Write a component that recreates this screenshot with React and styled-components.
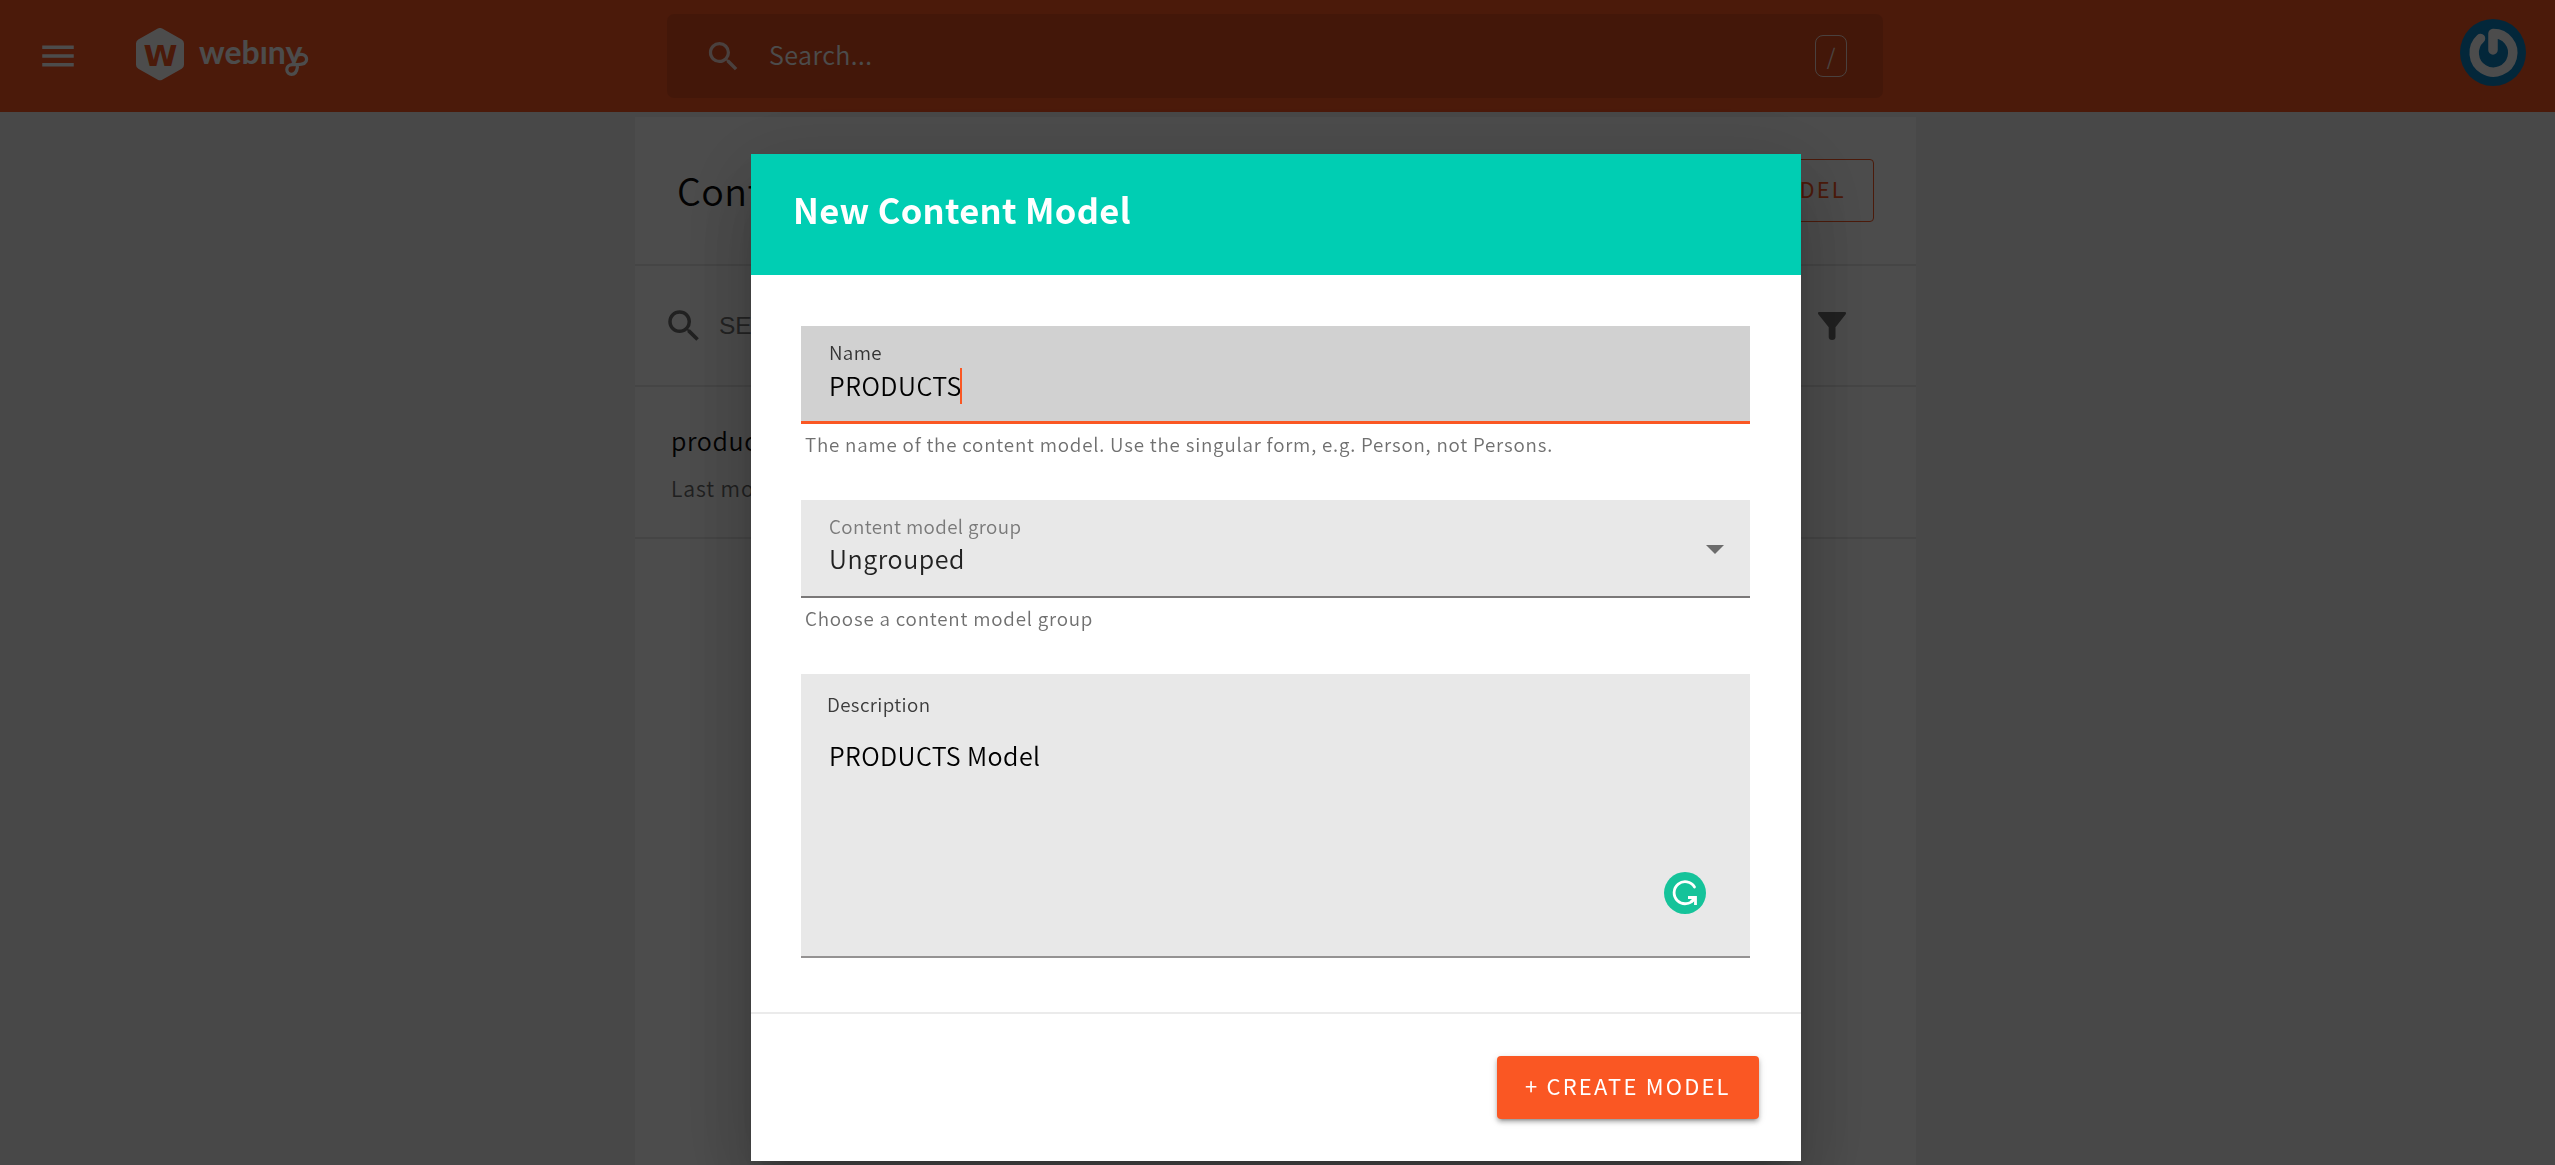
import React from "react";
import styled, { createGlobalStyle } from "styled-components";

const sans = `"Noto Sans CJK JP", "Noto Sans", sans-serif`;
const orange = "#fa5723";

const GlobalStyle = createGlobalStyle`
  *, *::before, *::after { box-sizing: border-box; }
  body {
    margin: 0;
    overflow: hidden;
    background: #f2f2f2;
    font-family: ${sans};
    font-weight: 350;
  }
`;

const Page = styled.div`
  height: 1165px;
  overflow: hidden;
  background: #f2f2f2;
`;

/* ---------- top bar ---------- */
const TopBar = styled.header`
  display: grid;
  grid-template-columns: 667px 1216px 1fr;
  align-items: center;
  height: 112px;
  background: ${orange};
`;
const Brand = styled.div`
  display: flex;
  align-items: center;
  padding-left: 37px;
  gap: 57px;
`;
const SearchBox = styled.div`
  display: flex;
  align-items: center;
  height: 84px;
  padding: 0 36px 0 37px;
  border-radius: 7px;
  background: rgba(0, 0, 0, 0.1);
  color: #fff;
`;
const SearchLabel = styled.span`
  flex: 1;
  padding: 0 0 4px 26px;
  font-size: 25.07px;
  line-height: 36px;
  letter-spacing: 0.45px;
`;
const KeyHint = styled.span`
  display: flex;
  align-items: center;
  justify-content: center;
  width: 32px;
  height: 42px;
  padding-bottom: 3px;
  border: 1px solid rgba(255, 255, 255, 0.8);
  border-radius: 8px;
  font-size: 22px;
  line-height: 30px;
  color: rgba(255, 255, 255, 0.85);
`;
const AvatarSlot = styled.div`
  display: flex;
  justify-content: flex-end;
  padding: 0 29px 7px 0;
`;

/* ---------- list behind the dialog ---------- */
const Panel = styled.main`
  width: 1281px;
  height: 1048px;
  margin: 5px 0 0 635px;
  background: #fff;
`;
const PanelRow = styled.div`
  display: flex;
  align-items: center;
  justify-content: space-between;
  height: ${(p) => p.$height}px;
  padding: ${(p) => p.$padding};
  border-bottom: 2px solid #e6e6e6;
`;
const PanelTitle = styled.h1`
  margin: 0;
  padding-bottom: 2px;
  font-size: 37.6px;
  font-weight: 350;
  line-height: 54px;
  letter-spacing: 0.4px;
  color: #0a0a0a;
`;
const OutlineButton = styled.button`
  height: 63px;
  padding: 0 27px 3px;
  border: 1px solid ${orange};
  border-radius: 4px;
  background: transparent;
  color: ${orange};
  font: 400 21.9px/32px ${sans};
  letter-spacing: 2.25px;
`;
const FilterSearch = styled.div`
  display: flex;
  align-items: center;
  gap: 14px;
`;
const Placeholder = styled.span`
  font: 24.5px/30px "Liberation Sans", Arial, sans-serif;
  color: #757575;
`;
const ListItem = styled.div`
  height: 152px;
  padding: 35px 0 0 36px;
  border-bottom: 2px solid #e6e6e6;
`;
const ItemName = styled.div`
  font-size: 25.07px;
  line-height: 36px;
  letter-spacing: 0.6px;
  color: #0a0a0a;
`;
const ItemMeta = styled.div`
  margin-top: 15px;
  font-size: 21.2px;
  line-height: 30px;
  letter-spacing: 0.9px;
  color: #6b6b6b;
`;

/* ---------- dialog ---------- */
const Scrim = styled.div`
  position: fixed;
  inset: 0;
  display: flex;
  align-items: flex-start;
  justify-content: center;
  padding: 154px 3px 0 0;
  background: rgba(0, 0, 0, 0.7);
`;
const Dialog = styled.section`
  display: flex;
  flex-direction: column;
  width: 1050px;
  height: 1007px;
  background: #fff;
  box-shadow: 0 19px 26px -12px rgba(0, 0, 0, 0.2),
    0 42px 66px 5px rgba(0, 0, 0, 0.14), 0 16px 80px 14px rgba(0, 0, 0, 0.12);
`;
const DialogTitle = styled.h2`
  height: 121px;
  margin: 0;
  padding: 30px 41px 0 42px;
  background: #00ceb3;
  color: #fff;
  font-size: 34.5px;
  font-weight: 700;
  line-height: 50px;
  letter-spacing: 0.33px;
`;
const DialogBody = styled.div`
  display: flex;
  flex-direction: column;
  gap: 44px;
  height: 737px;
  padding: 51px 51px 0 50px;
`;
const Field = styled.div`
  display: flex;
  flex-direction: column;
`;
const FieldBox = styled.div`
  display: flex;
  align-items: center;
  justify-content: space-between;
  height: 98px;
  padding: 0 26px 0 28px;
  background: ${(p) => (p.$focused ? "#d1d1d1" : "#e8e8e8")};
  border-bottom: ${(p) => (p.$focused ? `3px solid ${orange}` : "2px solid #7a7878")};
`;
const FieldText = styled.div`
  align-self: flex-start;
  padding-top: 14px;
`;
const Label = styled.div`
  font-size: 18.8px;
  line-height: 24px;
  letter-spacing: 0.36px;
  color: ${(p) => p.$color};
`;
const Value = styled.div`
  display: flex;
  margin-top: ${(p) => p.$gap}px;
  font-size: 25.07px;
  line-height: 36px;
  letter-spacing: ${(p) => p.$spacing}px;
  color: ${(p) => p.$color || "#000"};
`;
const Caret = styled.i`
  width: 2px;
  height: 36px;
  margin: 1px 0 -1px -2px;
  background: ${orange};
`;
const Helper = styled.div`
  margin-top: 8px;
  padding-left: 4px;
  font-size: 18.8px;
  line-height: 24px;
  letter-spacing: 0.78px;
  color: #707070;
`;
const TextArea = styled.div`
  display: flex;
  justify-content: space-between;
  height: 284px;
  padding: 18px 44px 0 26px;
  background: #e8e8e8;
  border-bottom: 2px solid #949292;
`;
const AreaText = styled.div`
  ${Value} { padding-left: 2px; }
`;
const AssistantBadge = styled.div`
  align-self: flex-end;
  height: 84px;
`;
const DialogFooter = styled.footer`
  display: flex;
  justify-content: flex-end;
  align-items: flex-start;
  flex: 1;
  padding: 42px 42px 0;
  border-top: 2px solid #ebebeb;
`;
const PrimaryButton = styled.button`
  width: 262px;
  height: 63px;
  padding: 0 0 4px 28px;
  border: 0;
  border-radius: 4px;
  background: ${orange};
  color: #fff;
  text-align: left;
  font: 400 21.9px/32px ${sans};
  letter-spacing: 2.22px;
  box-shadow: 0 5px 2px -4px rgba(0, 0, 0, 0.2), 0 3px 4px 0 rgba(0, 0, 0, 0.24),
    0 2px 9px 0 rgba(0, 0, 0, 0.12);
`;
const Svg = styled.svg`
  display: block;
  flex: none;
`;
const ArrowSvg = styled(Svg)`
  margin-top: 3px;
`;

/* ---------- drawings ---------- */
const MenuIcon = () => (
  <Svg width="42" height="42" viewBox="0 0 24 24" fill="#fff">
    <path d="M3 18h18v-2H3v2zm0-5h18v-2H3v2zm0-7v2h18V6H3z" />
  </Svg>
);
const SearchIcon = ({ size, color }) => (
  <Svg width={size} height={size} viewBox="0 0 24 24" fill={color}>
    <path d="M15.5 14h-.79l-.28-.27A6.47 6.47 0 0 0 16 9.5 6.5 6.5 0 1 0 9.5 16c1.61 0 3.09-.59 4.23-1.57l.27.28v.79l5 4.99L20.49 19l-4.99-5zm-6 0C7.01 14 5 11.99 5 9.5S7.01 5 9.5 5 14 7.01 14 9.5 11.99 14 9.5 14z" />
  </Svg>
);
const FilterIcon = () => (
  <Svg width="28" height="28" viewBox="0 0 28 28" fill="#6e6e6e">
    <path d="M1.2 0h25.6c1.1 0 1.6 1.3.9 2.2L17.5 15.2V25a3.4 3 0 0 1-6.8 0V15.2L.3 2.2C-.4 1.3.1 0 1.2 0z" />
  </Svg>
);
const Logo = () => (
  <Svg width="180" height="56" viewBox="0 0 180 56">
    <defs>
      <clipPath id="aboveBaseline">
        <rect x="0" y="0" width="180" height="36.5" />
      </clipPath>
    </defs>
    <path
      d="M24 4.5 43.5 15.500V36.800L24 47.700 4.500 36.800V15.500Z"
      fill="#fff"
      stroke="#fff"
      strokeWidth="9"
      strokeLinejoin="round"
    />
    <text
      transform="translate(7.400 38) scale(1.080 1)"
      fontFamily="DejaVu Sans"
      fontWeight="700"
      fontSize="28.5"
      fill={orange}
    >
      W
    </text>
    <text x="63" y="36" fontFamily="Lato" fontWeight="700" fontSize="32" fill="#fff" clipPath="url(#aboveBaseline)">
      webıny
    </text>
    <path
      d="M161.500 27C166 25.200 170.600 27 170.600 31.200C170.600 35.200 166.500 36.600 161 36.600H156.500C152.500 36.600 150.800 39 150.800 41.600C150.800 44.600 153 46.300 155.500 46.300C159.500 46.300 161 43 161.500 38.500"
      fill="none"
      stroke="#fff"
      strokeWidth="3.2"
      strokeLinecap="round"
    />
  </Svg>
);
const Avatar = () => (
  <Svg width="66" height="67" viewBox="0 0 66 67">
    <ellipse cx="33" cy="33.5" rx="33" ry="33.5" fill="#0c82c4" />
    <path
      d="M33 31V14.500A19.300 19.300 0 1 1 20.500 19.500"
      fill="none"
      stroke="#fff"
      strokeWidth="9.5"
      strokeLinecap="round"
      strokeLinejoin="round"
    />
  </Svg>
);
const DropArrow = () => (
  <ArrowSvg width="18" height="9" viewBox="0 0 18 9">
    <path d="M0 0h18L9 9z" fill="#6c6c6c" />
  </ArrowSvg>
);
const AssistantIcon = () => (
  <Svg width="42" height="42" viewBox="0 0 42 42" fill="none" stroke="#fff">
    <circle cx="21" cy="21" r="21" fill="#15c39a" stroke="none" />
    <path d="M30.500 15A11 11 0 1 0 30 27.200" strokeWidth="2.8" strokeLinecap="round" />
    <path d="M24 25.500H31.500V33" strokeWidth="2.8" />
    <path d="M31 26 27 30" strokeWidth="2.8" />
  </Svg>
);

export default function App() {
  return (
    <Page>
      <GlobalStyle />
      <TopBar>
        <Brand>
          <MenuIcon />
          <Logo />
        </Brand>
        <SearchBox>
          <SearchIcon size={39} color="rgba(255,255,255,.8)" />
          <SearchLabel>Search...</SearchLabel>
          <KeyHint>/</KeyHint>
        </SearchBox>
        <AvatarSlot>
          <Avatar />
        </AvatarSlot>
      </TopBar>
      <Panel>
        <PanelRow $height={149} $padding="0 42px 0 42px">
          <PanelTitle>Content Models</PanelTitle>
          <OutlineButton>+ NEW MODEL</OutlineButton>
        </PanelRow>
        <PanelRow $height={121} $padding="0 70px 0 28px">
          <FilterSearch>
            <SearchIcon size={42} color="#6e6e6e" />
            <Placeholder>SEARCH CONTENT MODEL</Placeholder>
          </FilterSearch>
          <FilterIcon />
        </PanelRow>
        <ListItem>
          <ItemName>products</ItemName>
          <ItemMeta>Last modified: 1 minute ago.</ItemMeta>
        </ListItem>
      </Panel>
      <Scrim>
        <Dialog>
          <DialogTitle>New Content Model</DialogTitle>
          <DialogBody>
            <Field>
              <FieldBox $focused>
                <FieldText>
                  <Label $color="#333">Name</Label>
                  <Value $gap={3} $spacing={0.5}>
                    PRODUCTS
                    <Caret />
                  </Value>
                </FieldText>
              </FieldBox>
              <Helper>The name of the content model. Use the singular form, e.g. Person, not Persons.</Helper>
            </Field>
            <Field>
              <FieldBox>
                <FieldText>
                  <Label $color="#7a7a7a">Content model group</Label>
                  <Value $gap={2} $spacing={0.55} $color="#222">
                    Ungrouped
                  </Value>
                </FieldText>
                <DropArrow />
              </FieldBox>
              <Helper>Choose a content model group</Helper>
            </Field>
            <TextArea>
              <AreaText>
                <Label $color="#3c3c3c">Description</Label>
                <Value $gap={21} $spacing={0.4}>
                  PRODUCTS Model
                </Value>
              </AreaText>
              <AssistantBadge>
                <AssistantIcon />
              </AssistantBadge>
            </TextArea>
          </DialogBody>
          <DialogFooter>
            <PrimaryButton>+ CREATE MODEL</PrimaryButton>
          </DialogFooter>
        </Dialog>
      </Scrim>
    </Page>
  );
}
